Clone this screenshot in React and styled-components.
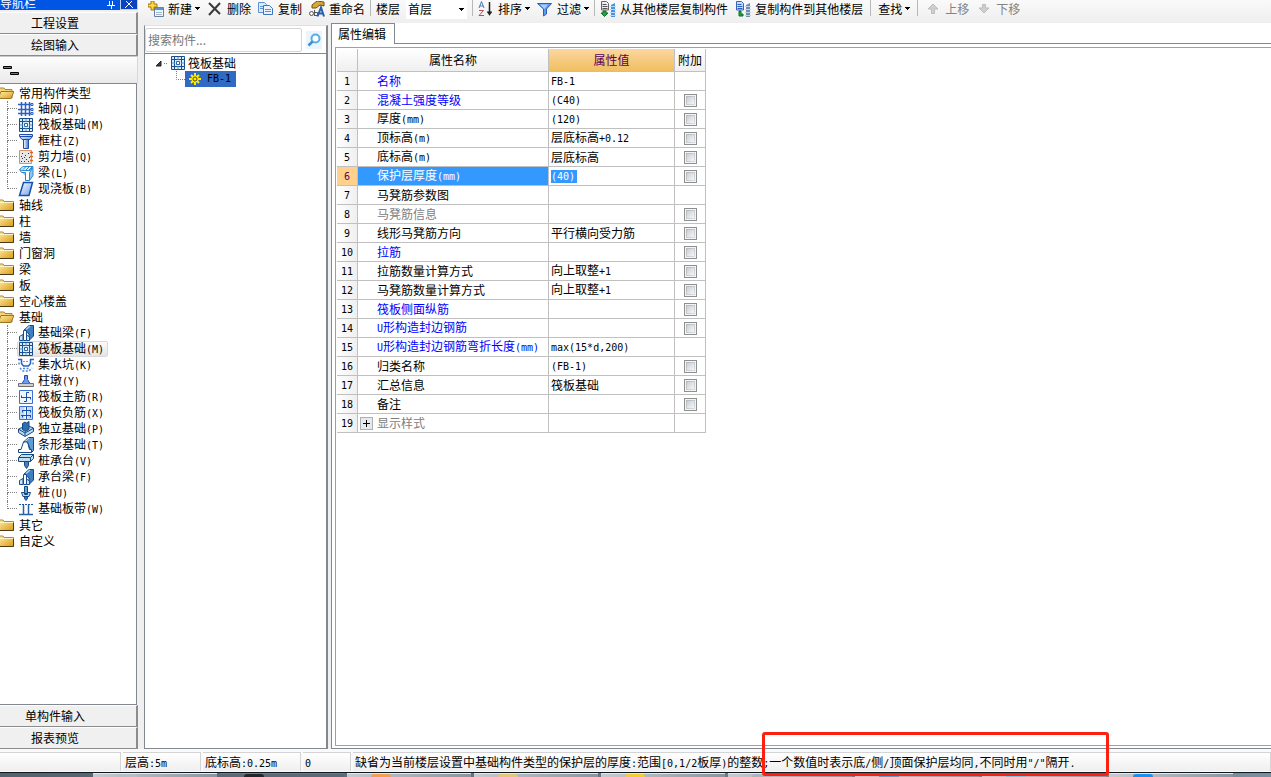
import React from "react";
import styled, { createGlobalStyle, css } from "styled-components";

const GlobalStyle = createGlobalStyle`
  *, *::before, *::after { box-sizing: border-box; }
  body {
    margin: 0;
    background: #ffffff;
    color: #000000;
    font-family: "Noto Sans CJK SC", sans-serif;
    font-size: 12px;
    line-height: 16px;
    overflow: hidden;
  }
  button, input, select { font: inherit; color: inherit; margin: 0; }
  svg { display: block; flex: none; }
`;

const LatinRun = styled.span`
  font-family: "DejaVu Sans Mono", monospace;
  font-size: 10px;
  white-space: pre;
`;

/* Half-width characters are set in a monospaced face, half an ideograph wide. */
function Mixed({ children }) {
  return children
    .split(/([\x20-\x7e]+)/)
    .map((run, i) => (i % 2 ? <LatinRun key={i}>{run}</LatinRun> : run));
}

/* ---------- Frame ---------- */

const Window = styled.div`
  display: flex;
  flex-direction: column;
  min-height: 100vh;
`;

const Workspace = styled.div`
  flex: 1;
  display: flex;
  background: #f0f0f0;
`;

const Content = styled.div`
  flex: 1;
  min-width: 0;
  display: flex;
  flex-direction: column;
`;

const Panels = styled.div`
  flex: 1;
  display: flex;
  gap: 3px;
  padding-left: 6px;
`;

/* ---------- Navigation column ---------- */

const Sidebar = styled.nav`
  width: 138px;
  flex: none;
  display: flex;
  flex-direction: column;
`;

const TitleBar = styled.div`
  display: flex;
  align-items: flex-end;
  height: 10px;
  margin-bottom: 2px;
  overflow: hidden;
  color: #ffffff;
  background: #0055e5;
  line-height: 14px;
`;

const TitleText = styled.span`
  flex: 1;
`;

const TitleButton = styled.button`
  display: flex;
  justify-content: center;
  align-items: flex-end;
  width: 18px;
  height: 10px;
  padding: 0;
  border: ${(p) => (p.$boxed ? "1px solid #b8d0f8" : "none")};
  border-top: none;
  background: ${(p) => (p.$boxed ? "#0a43bd" : "none")};
`;

const SectionButton = styled.button`
  height: 22px;
  padding: 0 26px 0 0;
  border: solid;
  border-width: 1px 2px 1px 0;
  border-color: #ffffff #8c8c8c #8c8c8c #ffffff;
  background: #f0f0f0;
  line-height: 18px;
`;

const MiniBar = styled.div`
  height: 27px;
  padding: 9px 3px;
  border-top: 1px solid #c8c8c8;
  border-right: 1px solid #d8d8d8;
  background: linear-gradient(#fdfdfd, #eaeaea);
`;

const NavTree = styled.ul`
  flex: 1;
  margin: 0 1px 0 0;
  padding: 1px 0 0;
  list-style: none;
  background: #ffffff;
  border: 1px solid #828790;
  border-left: none;
`;

const FolderRow = styled.div`
  display: flex;
  align-items: center;
  gap: 5px;
  height: 16px;
`;

const ChildList = styled.ul`
  margin: 0;
  padding: 0;
  list-style: none;
`;

const ChildItem = styled.li`
  display: flex;
  align-items: center;
  height: 16px;
  padding-left: 7px;
`;

const Branch = styled.span`
  display: flex;
  flex-direction: column;
  width: 10px;
  height: 16px;
  &::before {
    content: "";
    height: 8px;
    border-left: 1px dotted #808080;
    border-bottom: 1px dotted #808080;
  }
  &::after {
    content: "";
    height: 8px;
    border-left: ${(p) => (p.$last ? "none" : "1px dotted #808080")};
  }
`;

const ChildLabel = styled.span`
  display: flex;
  align-items: center;
  gap: 4px;
  height: 16px;
  padding: 0 3px 0 0;
  border: 1px solid transparent;
  border-radius: 2px;
  white-space: nowrap;
  ${(p) =>
    p.$active &&
    css`
      border-color: #d9d9d9;
      background: linear-gradient(#fafafa, #e5e5e5);
    `}
`;

/* ---------- Toolbar ---------- */

const Toolbar = styled.div`
  display: flex;
  align-items: flex-start;
  gap: 7px;
  height: 23px;
  padding-left: 10px;
  background: linear-gradient(#fafafa, #eeeeee);
  white-space: nowrap;
  overflow: hidden;
`;

const ToolButton = styled.button`
  display: flex;
  align-items: center;
  gap: 4px;
  height: 17px;
  padding: 0;
  border: none;
  background: none;
  color: ${(p) => (p.disabled ? "#838383" : "#000000")};
`;

const Separator = styled.span`
  width: 1px;
  height: 16px;
  margin: 0 ${(p) => (p.$tight ? "-2px" : "0")};
  background: #b8b8b8;
`;

const FloorField = styled.label`
  display: flex;
  gap: 6px;
  line-height: 17px;
`;

const FloorBox = styled.span`
  display: grid;
  align-items: center;
  width: 61px;
  height: 19px;
  background: #ffffff;
  > * { grid-area: 1 / 1; }
  > svg { justify-self: end; margin-right: 3px; }
`;

const FloorSelect = styled.select`
  appearance: none;
  width: 100%;
  height: 16px;
  padding: 0 2px;
  border: none;
  background: none;
  align-self: start;
`;

/* ---------- Component list ---------- */

const ListPanel = styled.section`
  width: 184px;
  flex: none;
  display: flex;
  flex-direction: column;
  margin: 2px 0 0;
  border: 1px solid #828790;
  border-right-width: 2px;
  border-top-color: #e0e0e0;
  background: #ffffff;
`;

const SearchRow = styled.div`
  display: flex;
  align-items: center;
  height: 28px;
  gap: 4px;
  border-bottom: 1px solid #828790;
`;

const SearchInput = styled.input`
  width: 157px;
  height: 24px;
  padding: 0 2px;
  border: 1px solid #d5d5d5;
  border-radius: 2px;
  background: #ffffff;
  &::placeholder { color: #777777; opacity: 1; }
`;

const SearchButton = styled.button`
  display: flex;
  align-items: center;
  justify-content: center;
  width: 16px;
  height: 18px;
  padding: 0;
  border: none;
  background: #eaf5fd;
`;

const ComponentRoot = styled.div`
  display: flex;
  align-items: center;
  gap: 2px;
  height: 16px;
  margin-top: 1px;
  padding-left: 10px;
`;

const ComponentLeaf = styled.div`
  display: flex;
  height: 16px;
  padding-left: 30px;
`;

const LeafLabel = styled.span`
  display: flex;
  align-items: center;
  gap: 6px;
  height: 16px;
  padding: 0 5px 0 4px;
  background: #316ac5;
`;

/* ---------- Property editor ---------- */

const EditorPanel = styled.section`
  flex: 1;
  min-width: 0;
  display: flex;
  flex-direction: column;
  border-left: 1px solid #828790;
  border-bottom: 1px solid #828790;
  background: #ffffff;
`;

const TabStrip = styled.div`
  display: flex;
  height: 21px;
  &::after {
    content: "";
    flex: 1;
    border-bottom: 1px solid #828790;
  }
`;

const Tab = styled.button`
  width: 63px;
  padding: 0 0 0 6px;
  border: 1px solid #828790;
  border-left: none;
  border-bottom: none;
  background: #ffffff;
  text-align: left;
  line-height: 18px;
`;

const EditorFrame = styled.div`
  flex: 1;
  margin: 3px 0 2px 3px;
  padding: 1px 0 0 1px;
  border: 1px solid #a0a0a0;
  border-right: none;
`;

const Grid = styled.table`
  table-layout: fixed;
  width: 369px;
  border-collapse: separate;
  border-spacing: 0;
`;

const cell = css`
  height: 19px;
  padding: 0;
  border: solid #c0c0c0;
  border-width: 0 1px 1px 0;
  font-weight: 400;
  white-space: nowrap;
  overflow: hidden;
`;

const HeadCell = styled.th`
  ${cell}
  height: 23px;
  color: ${(p) => (p.$active ? "#5a005a" : "#000000")};
  background: ${(p) =>
    p.$active
      ? "linear-gradient(#fbd69f, #f0bf60)"
      : "linear-gradient(#ffffff, #efefef)"};
`;

const NumberCell = styled.th`
  ${cell}
  color: ${(p) => (p.$active ? "#5a005a" : "#000000")};
  background: ${(p) =>
    p.$active ? "#ffd18a" : "linear-gradient(90deg, #ffffff, #efefef)"};
`;

const tones = { link: "#0000ff", muted: "#808080", plain: "#000000" };

const NameCell = styled.td`
  ${cell}
  padding-left: ${(p) => (p.$expandable ? "2px" : "19px")};
  color: ${(p) => (p.$active ? "#ffffff" : tones[p.$tone])};
  background: ${(p) => (p.$active ? "#3399ff" : "#ffffff")};
`;

const NameWithToggle = styled.div`
  display: flex;
  align-items: center;
  gap: 4px;
`;

const ExpandButton = styled.button`
  display: flex;
  align-items: center;
  justify-content: center;
  width: 13px;
  height: 13px;
  padding: 0;
  border: 1px solid #b0b0b0;
  background: #e6e9ee;
`;

const ValueCell = styled.td`
  ${cell}
  padding-left: 2px;
`;

const ValueInput = styled.input`
  display: block;
  width: 26px;
  height: 13px;
  padding: 0;
  border: none;
  border-radius: 0;
  background: #3399ff;
  color: #ffffff;
  font-family: "DejaVu Sans Mono", monospace;
  font-size: 10px;
  line-height: 12px;
`;

const CheckCell = styled.td`
  ${cell}
`;

const CheckBox = styled.input`
  appearance: none;
  display: block;
  width: 13px;
  height: 13px;
  margin: 0 auto;
  padding: 2px;
  border: 1px solid #8e8f8f;
  background:
    linear-gradient(135deg, #cbcfd5, #f6f6f6) content-box,
    linear-gradient(135deg, #aeb3b9, #e0e3e6) padding-box;
  box-shadow: inset 0 0 0 1px #f4f4f4;
`;

/* ---------- Status bar and desktop task bar ---------- */

const StatusBar = styled.footer`
  display: flex;
  gap: 2px;
  height: 23px;
  padding: 3px 0 1px;
  background: #fafafa;
`;

const StatusCell = styled.div`
  width: ${(p) => p.$width}px;
  flex: none;
  padding-left: 2px;
  border: solid #d4d4d4;
  border-width: 1px 1px 0 0;
  background: linear-gradient(#ffffff, #efefef);
  line-height: 18px;
  white-space: nowrap;
`;

const StatusMessage = styled(StatusCell)`
  width: auto;
  flex: 1;
`;

const Marked = styled.span`
  position: relative;
  &::after {
    content: "";
    position: absolute;
    z-index: 1;
    left: -7px;
    top: -21px;
    width: 347px;
    height: 44px;
    border: 3px solid #fb2010;
    border-radius: 3px;
  }
`;

const TaskBar = styled.div`
  display: flex;
  gap: 3px;
  height: 5px;
  padding-left: 93px;
  border-top: 1px solid #10181e;
  background: linear-gradient(90deg, #54646f, #7890a0);
  overflow: hidden;
`;

const TaskItem = styled.span`
  width: 124px;
  height: 4px;
  display: flex;
  padding-left: 24px;
  background: ${(p) =>
    p.$dim ? "#596b78" : "linear-gradient(90deg, #c5ccd1, #8796a1)"};
  border-top: 1px solid ${(p) => (p.$dim ? "#6d7d88" : "#e4e9ec")};
  &::before {
    content: "";
    width: 20px;
    height: 3px;
    border-radius: 8px 8px 0 0;
    background: ${(p) => p.$tint};
  }
`;

/* ---------- Icons ---------- */

const CaretShape = styled.svg`
  margin-left: -1px;
`;

const Caret = () => (
  <CaretShape width="5" height="3" viewBox="0 0 5 3" aria-hidden="true">
    <path d="M0 0h5v1H4v1H3v1H2V2H1V1H0z" fill="#000" />
  </CaretShape>
);

const icon = (children) => (
  <svg width="16" height="16" viewBox="0 0 16 16" fill="none" aria-hidden="true">
    {children}
  </svg>
);

const FolderIcon = ({ open }) => (
  <svg width="14" height="16" viewBox="0 0 14 16" aria-hidden="true">
    <defs>
      <linearGradient id="folder" x1="0" y1="0" x2="1" y2="1">
        <stop offset="0" stopColor="#fff0a8" />
        <stop offset="1" stopColor="#dc9a18" />
      </linearGradient>
    </defs>
    {open ? (
      <>
        <path d="M-2 3h6l1 1.500h7V13H-2z" fill="#f3d67c" stroke="#a88432" />
        <path d="M1 6.500h13L11 13.500H-2z" fill="url(#folder)" stroke="#9c7428" />
      </>
    ) : (
      <>
        <path d="M-2 3h5l1 1.500h9.500V13.500H-2z" fill="url(#folder)" stroke="#b18a30" />
        <path d="M-2 5.500h15" stroke="#fff4bf" />
        <path d="M0 13.500h13.500V6" stroke="#4c3a10" fill="none" />
      </>
    )}
  </svg>
);

const BlueGradients = () => (
  <defs>
    <linearGradient id="steel" x1="0" y1="0" x2="1" y2="0">
      <stop offset="0" stopColor="#ffffff" />
      <stop offset="1" stopColor="#3f78cc" />
    </linearGradient>
    <linearGradient id="sheet" x1="0" y1="0" x2="1" y2="1">
      <stop offset="0" stopColor="#ffffff" />
      <stop offset="1" stopColor="#6f9fe8" />
    </linearGradient>
  </defs>
);

const raft = (
  <>
    <path d="M1.500 1.500h13v13h-13z" fill="#d9ecfb" stroke="#174f8f" />
    <path d="M4.500 2v12M11.500 2v12M2 4.500h12M2 11.500h12" stroke="#174f8f" />
    <path d="M8 2v3M8 11v3M2 8h3M11 8h3" stroke="#5d93c8" />
    <path d="M6.500 6.500h3v3h-3z" fill="#fff" stroke="#2a66a8" />
  </>
);

const beamBase = (
  <>
    <path d="M6 5l5-4.500h4.500V11L11 15.500V9z" fill="#3d7ec0" stroke="#164880" />
    <path d="M8 4.500l4-3.500" stroke="#a8d2f4" strokeWidth="1.500" />
    <path d="M1.500 15.500v-4L5 9.500v6z" fill="#cfe6f8" stroke="#174f8f" />
    <path d="M5.500 5.500h3v10h-3z" fill="#ffffff" stroke="#174f8f" />
    <path d="M8.500 10l3 2v3.500h-3z" fill="#cfe6f8" stroke="#174f8f" />
  </>
);

const glyphs = {
  grid: (
    <>
      <path
        d="M3.500 1v14M7.500 1v14M11.500 1v14M0 3.500h13M0 8.500h13M0 12.500h13"
        stroke="#2a60c8"
        strokeWidth="1.500"
      />
      <path d="M13 2.500h2v2h-2zM13 7.500h2v2h-2zM13 11.500h2v2h-2z" stroke="#2a60c8" fill="#fff" />
    </>
  ),
  raft,
  column: (
    <>
      <path d="M1.500 1.500h13v2L12 6.500H4L1.500 3.500z" fill="url(#sheet)" stroke="#1c4cac" />
      <path d="M2 3.500h12" stroke="#1c4cac" />
      <path d="M5.500 6.500h5v9h-5z" fill="url(#steel)" stroke="#1c4cac" />
    </>
  ),
  wall: (
    <>
      <path d="M1.500 1.500h12v13h-12z" fill="#e6e6e6" stroke="#e0915c" />
      <path
        d="M4 4.500h1M7 6.500h1M10 4.500h1M4 9.500h1M8 10.500h1M11 8.500h1M6 12.500h1M3 7.500h1M10 12.500h1M6 8.500h1M3 12.500h1"
        stroke="#333"
      />
      <path d="M12 3.500h3M12 7.500h3M12 11.500h3" stroke="#d86818" strokeWidth="1.500" />
    </>
  ),
  beam: (
    <>
      <path d="M1.500 4.500L5 1.500h10l-3 4H4z" fill="#d5eeff" stroke="#2a8ad0" />
      <path d="M1.500 4.500l2 3h4v8h4v-8l3.500-5v8l-3.500 5" fill="#8cc6f0" stroke="#2a8ad0" />
      <path d="M5 4.500l3-3M8 5l3-3M11 5l3-3" stroke="#2a8ad0" />
      <path d="M8 8h3v7H8z" fill="#fff" />
    </>
  ),
  slab: <path d="M5.500 1.500h9L11 14.500H1.500z" fill="url(#sheet)" stroke="#174fae" strokeWidth="1.500" />,
  beamBase,
  pit: (
    <>
      <path d="M0 2.500h3.500v4l2 2.500h5l2-2.500v-4H16" stroke="#2a60c8" strokeWidth="1.500" />
      <path
        d="M1 5.500v3.500M2 11l3 3h6l3-3M15 5.500v3.500M5 11.500h6"
        stroke="#4d88dc"
        strokeWidth="1.500"
        strokeDasharray="2 1.500"
      />
      <path d="M5 4.500h6" stroke="#6ba0e8" strokeDasharray="2 1" />
    </>
  ),
  pier: (
    <>
      <path d="M4 10.500l2.500-4v-4h3v4l2.500 4z" fill="#6f9bea" stroke="#1c4cac" />
      <path d="M.5 10.500h15v3H.5z" fill="#cfcfcf" stroke="#707070" />
    </>
  ),
  mainBar: (
    <>
      <path d="M1.500 1.500h13v13h-13z" fill="#eef5ff" stroke="#3d72d2" />
      <path d="M3 8.500h10M8.500 3.500v9M8.500 3.500H11M8.500 12.500H6M3.500 6.500v2M12.500 8.500v2" stroke="#174fae" />
    </>
  ),
  topBar: (
    <>
      <path d="M1.500 1.500h13v13h-13z" fill="#c3d9fc" stroke="#3d72d2" />
      <path d="M8 2v12" stroke="#fff" strokeWidth="3" />
      <path d="M8.500 2v12M4 5.500h9M3 10.500h10M4.500 5.500v2M12.500 5.500v2M4.500 10.500v2M12.500 10.500v2" stroke="#174fae" />
    </>
  ),
  isolated: (
    <>
      <path d="M.5 8L9 4.500l6.500 2.500v3.500L7 15.500l-6.500-4z" fill="#b8daf5" stroke="#164880" />
      <path d="M4.500 2.500L7 1l1.500 1L11 .5V8l-3.500 2.500-3-2z" fill="#2f6fae" stroke="#164880" />
      <path d="M1 8.500l6 3.500 8-4.500M7 12v3" stroke="#164880" />
    </>
  ),
  strip: (
    <>
      <path d="M5.500 5l5-4.500h5v13l-2 2-4-10z" fill="#5f9bd4" stroke="#164880" />
      <path d="M7 4.500l4-3.500" stroke="#cfe6f8" />
      <path d="M.5 15.500v-3H3l2.500-7.500h4l2 7.500h2v3z" fill="#fff" stroke="#164880" />
    </>
  ),
  pileCap: (
    <>
      <path d="M.5 4.500l3-3h12v4l-3 3H.5z" fill="#c1dff5" stroke="#164880" />
      <path d="M1 4.500h11.500l3-3M12.500 4.500v4" stroke="#164880" />
      <path d="M6.500 8.500h4v4l-2 3-2-3z" fill="#477eb8" stroke="#164880" />
    </>
  ),
  pile: (
    <>
      <path d="M6.500 1.500h3v7h-3z" fill="#6ea2d8" stroke="#164880" />
      <path d="M3.500 7.500h3v2h3v-2h3L11 11.500H5z" fill="#b9d9f2" stroke="#164880" />
      <path d="M6.500 11.500h3v2L8 15.500l-1.500-2z" fill="#3875b3" stroke="#164880" />
    </>
  ),
  band: (
    <>
      <path d="M1 3.500h14" stroke="#174fae" strokeDasharray="2 1" />
      <path d="M1 13.500h14M5.500 4v10M10.500 4v10" stroke="#2a60a8" strokeWidth="1.500" />
    </>
  ),
};

const NewIcon = () =>
  icon(
    <>
      <path d="M6.500 6.500h9v9h-9z" fill="#eef5fb" stroke="#6583a6" />
      <path d="M7 7h8v2H7z" fill="#5e91d0" />
      <path d="M8 11.500h6M8 13.500h6" stroke="#a5b8cd" />
      <path d="M3 0h3v3h3v3H6v3H3V6H0V3h3z" fill="#ffd83d" stroke="#a07808" />
    </>
  );
const DeleteIcon = () => icon(<path d="M2 2l11 11M13 2L2 14" stroke="#3a3a3a" strokeWidth="2" />);
const CopyIcon = () =>
  icon(
    <>
      <path d="M.5 1.500h6l2 2v8h-8z" fill="#d9ebff" stroke="#5f91d0" />
      <path d="M2 5.500h5M2 7.500h5" stroke="#5f91d0" />
      <path d="M5.500 4.500h6l3 3v6h-9z" fill="#eaf4ff" stroke="#3d74bd" />
      <path d="M7 8.500h6M7 10.500h6" stroke="#5f91d0" />
    </>
  );
const RenameIcon = () =>
  icon(
    <>
      <path d="M3 4l5-4 7 1v4l-4-1-4 3H3z" fill="#d9a83b" stroke="#725214" />
      <ellipse cx="2.500" cy="12.500" rx="2" ry="2" stroke="#555" />
      <path d="M5.500 9v6M5.500 11.500h3v3h-3" stroke="#555" />
      <path d="M8.500 15.500l3.500-9 3 9M10 12.500h4" stroke="#285fac" strokeWidth="2" />
    </>
  );
const SortIcon = () =>
  icon(
    <>
      <path d="M1 7l2.500-6.500L6 7M2 5h3" stroke="#4778ba" />
      <path d="M1 9.500h4.500L1 14.500h5" stroke="#ba4d58" />
      <path d="M11.500 1v12M9.500 10.500l2 3 2-3" stroke="#222" strokeWidth="1.500" />
    </>
  );
const FilterIcon = () =>
  icon(
    <>
      <path d="M.5 2.500h14L9.500 8v5l-3 2V8z" fill="#5d9bec" stroke="#2a5ec0" />
      <path d="M3 3.500h8L7.500 8z" fill="#a9cfff" />
    </>
  );
const FloorCopyIcon = ({ blue }) =>
  icon(
    <>
      <path d="M1.500 .5h5l2 2V9h-7z" fill={blue ? "#c8ddff" : "#eee"} stroke={blue ? "#3567b8" : "#666"} />
      <path d="M2.500 3.500h4M2.500 5.500h5M2.500 7.500h5" stroke={blue ? "#2b5fc0" : "#555"} />
      <path d="M11 4l4-2v14h-4z" fill={blue ? "#6d8fae" : "#4c93dd"} />
      <path d="M10 5.500h6M10 8.500h6M10 11.500h6M10 14.500h6" stroke={blue ? "#c3d3e2" : "#b4dcff"} />
      <path d={blue ? "M4 10h2v3h2v2H4z" : "M3 10h3v2h2l-3.500 3.500L1 12h2z"} fill="#22a53c" stroke="#087326" />
    </>
  );
const MoveIcon = ({ down }) =>
  icon(
    <path
      d={down ? "M6.500 3.500h3V7H13l-5 5-5-5h3.500z" : "M8 3l5 5H9.500v4.500h-3V8H3z"}
      fill="#cfcfcf"
      stroke="#bcbcbc"
    />
  );
const SearchIcon = () =>
  icon(
    <>
      <circle cx="9.500" cy="6.500" r="4" fill="#fff" stroke="#55aee5" strokeWidth="2" />
      <path d="M6.500 9.500l-4 4" stroke="#4190cf" strokeWidth="2.500" />
    </>
  );
const SunIcon = () => (
  <svg width="12" height="12" viewBox="0 0 12 12" fill="none" aria-hidden="true">
    <path d="M6 0v12M0 6h12M2 2l8 8M10 2l-8 8" stroke="#ffec00" strokeWidth="2" />
    <circle cx="6" cy="6" r="3.500" fill="#ffec00" />
    <circle cx="6" cy="6" r="2" fill="#ffec00" stroke="#554c00" />
  </svg>
);
const TreeArrow = () => (
  <svg width="7" height="7" viewBox="0 0 7 7" aria-hidden="true">
    <path d="M6 1v5H1z" fill="#404040" stroke="#222" />
  </svg>
);
const PinIcon = () => (
  <svg width="9" height="9" viewBox="0 0 9 9" aria-hidden="true">
    <path d="M2.500 0v4M5.500 0v4M0 4.500h8M4.500 5v3" stroke="#fff" fill="none" />
  </svg>
);
const CloseIcon = () => (
  <svg width="8" height="8" viewBox="0 0 8 8" aria-hidden="true">
    <path d="M0 -1l8 8M8 -1l-8 8" stroke="#fff" />
  </svg>
);
const BarsIcon = () => (
  <svg width="16" height="10" viewBox="0 0 16 10" aria-hidden="true">
    <path d="M.5.500h8v2h-8zM7.500 6.500h8v2h-8z" fill="#20a0a0" stroke="#000" />
  </svg>
);
const RootLink = () => (
  <svg width="4" height="1" viewBox="0 0 4 1" aria-hidden="true">
    <path d="M0 .5h1M2 .5h1" stroke="#808080" />
  </svg>
);
const LeafLink = () => (
  <svg width="10" height="16" viewBox="0 0 10 16" fill="none" aria-hidden="true">
    <path d="M1.500 0v8.500H10" stroke="#808080" strokeDasharray="1 1" />
  </svg>
);
const PlusIcon = () => (
  <svg width="7" height="7" viewBox="0 0 7 7" aria-hidden="true">
    <path d="M3.500 0v7M0 3.500h7" stroke="#000" />
  </svg>
);

/* ---------- Data ---------- */

const navigation = [
  {
    label: "常用构件类型",
    children: [
      ["grid", "轴网(J)"],
      ["raft", "筏板基础(M)"],
      ["column", "框柱(Z)"],
      ["wall", "剪力墙(Q)"],
      ["beam", "梁(L)"],
      ["slab", "现浇板(B)"],
    ],
  },
  { label: "轴线" },
  { label: "柱" },
  { label: "墙" },
  { label: "门窗洞" },
  { label: "梁" },
  { label: "板" },
  { label: "空心楼盖" },
  {
    label: "基础",
    active: "筏板基础(M)",
    children: [
      ["beamBase", "基础梁(F)"],
      ["raft", "筏板基础(M)"],
      ["pit", "集水坑(K)"],
      ["pier", "柱墩(Y)"],
      ["mainBar", "筏板主筋(R)"],
      ["topBar", "筏板负筋(X)"],
      ["isolated", "独立基础(P)"],
      ["strip", "条形基础(T)"],
      ["pileCap", "桩承台(V)"],
      ["beamBase", "承台梁(F)"],
      ["pile", "桩(U)"],
      ["band", "基础板带(W)"],
    ],
  },
  { label: "其它" },
  { label: "自定义" },
];

const properties = [
  { name: "名称", value: "FB-1", tone: "link", noExtra: true },
  { name: "混凝土强度等级", value: "(C40)", tone: "link" },
  { name: "厚度(mm)", value: "(120)" },
  { name: "顶标高(m)", value: "层底标高+0.12" },
  { name: "底标高(m)", value: "层底标高" },
  { name: "保护层厚度(mm)", value: "(40)", active: true },
  { name: "马凳筋参数图", value: "", noExtra: true },
  { name: "马凳筋信息", value: "", tone: "muted" },
  { name: "线形马凳筋方向", value: "平行横向受力筋" },
  { name: "拉筋", value: "", tone: "link" },
  { name: "拉筋数量计算方式", value: "向上取整+1" },
  { name: "马凳筋数量计算方式", value: "向上取整+1" },
  { name: "筏板侧面纵筋", value: "", tone: "link" },
  { name: "U形构造封边钢筋", value: "", tone: "link" },
  { name: "U形构造封边钢筋弯折长度(mm)", value: "max(15*d,200)", tone: "link", noExtra: true },
  { name: "归类名称", value: "(FB-1)" },
  { name: "汇总信息", value: "筏板基础" },
  { name: "备注", value: "" },
  { name: "显示样式", value: "", tone: "muted", noExtra: true, expandable: true },
];

const tasks = [
  { tint: "#b4c0c8" },
  { tint: "#20282e", dim: true },
  { tint: "#f0a050" },
  { tint: "#e2c877" },
  { tint: "#f0d030" },
  { tint: "#a8b6c0" },
  { tint: "#48a8dc" },
  { tint: "#60d0f0" },
  { tint: "#1c90f0" },
];

/* ---------- Parts ---------- */

function NavFolder({ folder }) {
  return (
    <li>
      <FolderRow>
        <FolderIcon open={Boolean(folder.children)} />
        {folder.label}
      </FolderRow>
      {folder.children && (
        <ChildList>
          {folder.children.map(([glyph, label], i) => (
            <ChildItem key={label}>
              <Branch $last={i === folder.children.length - 1} />
              <ChildLabel $active={folder.active === label}>
                {icon(glyphs[glyph])}
                <span>
                  <Mixed>{label}</Mixed>
                </span>
              </ChildLabel>
            </ChildItem>
          ))}
        </ChildList>
      )}
    </li>
  );
}

function PropertyRow({ index, item }) {
  const { name, value, tone = "plain", active, noExtra, expandable } = item;
  return (
    <tr>
      <NumberCell scope="row" $active={active}>
        <Mixed>{String(index)}</Mixed>
      </NumberCell>
      <NameCell $tone={tone} $active={active} $expandable={expandable}>
        {expandable ? (
          <NameWithToggle>
            <ExpandButton aria-label={name}>
              <PlusIcon />
            </ExpandButton>
            {name}
          </NameWithToggle>
        ) : (
          <Mixed>{name}</Mixed>
        )}
      </NameCell>
      <ValueCell>
        {active ? (
          <ValueInput aria-label={name} defaultValue={value} />
        ) : (
          <Mixed>{value}</Mixed>
        )}
      </ValueCell>
      <CheckCell>{!noExtra && <CheckBox type="checkbox" aria-label={name} />}</CheckCell>
    </tr>
  );
}

export default function App() {
  return (
    <Window>
      <GlobalStyle />
      <svg width="0" height="0" aria-hidden="true">
        <BlueGradients />
      </svg>
      <Workspace>
        <Sidebar>
          <TitleBar>
            <TitleText>导航栏</TitleText>
            <TitleButton aria-label="固定">
              <PinIcon />
            </TitleButton>
            <TitleButton aria-label="关闭" $boxed>
              <CloseIcon />
            </TitleButton>
          </TitleBar>
          <SectionButton>工程设置</SectionButton>
          <SectionButton>绘图输入</SectionButton>
          <MiniBar>
            <BarsIcon />
          </MiniBar>
          <NavTree>
            {navigation.map((folder) => (
              <NavFolder key={folder.label} folder={folder} />
            ))}
          </NavTree>
          <SectionButton>单构件输入</SectionButton>
          <SectionButton>报表预览</SectionButton>
        </Sidebar>

        <Content>
          <Toolbar>
            <ToolButton>
              <NewIcon />
              新建
              <Caret />
            </ToolButton>
            <ToolButton>
              <DeleteIcon />
              删除
            </ToolButton>
            <ToolButton>
              <CopyIcon />
              复制
            </ToolButton>
            <ToolButton>
              <RenameIcon />
              重命名
            </ToolButton>
            <Separator $tight />
            <FloorField>
              楼层
              <FloorBox>
                <FloorSelect defaultValue="首层">
                  <option>首层</option>
                </FloorSelect>
                <Caret />
              </FloorBox>
            </FloorField>
            <Separator $tight />
            <ToolButton>
              <SortIcon />
              排序
              <Caret />
            </ToolButton>
            <ToolButton>
              <FilterIcon />
              过滤
              <Caret />
            </ToolButton>
            <Separator $tight />
            <ToolButton>
              <FloorCopyIcon />
              从其他楼层复制构件
            </ToolButton>
            <ToolButton>
              <FloorCopyIcon blue />
              复制构件到其他楼层
            </ToolButton>
            <Separator />
            <ToolButton>
              查找
              <Caret />
            </ToolButton>
            <Separator />
            <ToolButton disabled>
              <MoveIcon />
              上移
            </ToolButton>
            <ToolButton disabled>
              <MoveIcon down />
              下移
            </ToolButton>
          </Toolbar>

          <Panels>
            <ListPanel>
              <SearchRow>
                <SearchInput type="text" aria-label="搜索构件" placeholder="搜索构件..." />
                <SearchButton aria-label="搜索">
                  <SearchIcon />
                </SearchButton>
              </SearchRow>
              <ComponentRoot>
                <TreeArrow />
                <RootLink />
                {icon(raft)}
                <span>筏板基础</span>
              </ComponentRoot>
              <ComponentLeaf>
                <LeafLink />
                <LeafLabel>
                  <SunIcon />
                  <Mixed>FB-1</Mixed>
                </LeafLabel>
              </ComponentLeaf>
            </ListPanel>

            <EditorPanel>
              <TabStrip>
                <Tab>属性编辑</Tab>
              </TabStrip>
              <EditorFrame>
                <Grid>
                  <colgroup>
                    <col width="21" />
                    <col width="191" />
                    <col width="126" />
                    <col width="31" />
                  </colgroup>
                  <thead>
                    <tr>
                      <HeadCell />
                      <HeadCell scope="col">属性名称</HeadCell>
                      <HeadCell scope="col" $active>
                        属性值
                      </HeadCell>
                      <HeadCell scope="col">附加</HeadCell>
                    </tr>
                  </thead>
                  <tbody>
                    {properties.map((item, i) => (
                      <PropertyRow key={item.name} index={i + 1} item={item} />
                    ))}
                  </tbody>
                </Grid>
              </EditorFrame>
            </EditorPanel>
          </Panels>
        </Content>
      </Workspace>

      <StatusBar>
        <StatusCell $width={121} />
        <StatusCell $width={78}>
          <Mixed>层高:5m</Mixed>
        </StatusCell>
        <StatusCell $width={98}>
          <Mixed>底标高:0.25m</Mixed>
        </StatusCell>
        <StatusCell $width={48}>
          <Mixed>0</Mixed>
        </StatusCell>
        <StatusMessage>
          <Mixed>缺省为当前楼层设置中基础构件类型的保护层的厚度:范围[0,1/2板厚)的整数;</Mixed>
          <Marked>
            <Mixed>一个数值时表示底/侧/顶面保护层均同,不同时用"/"隔开.</Mixed>
          </Marked>
        </StatusMessage>
      </StatusBar>
      <TaskBar>
        {tasks.map((task, i) => (
          <TaskItem key={i} $tint={task.tint} $dim={task.dim} />
        ))}
      </TaskBar>
    </Window>
  );
}
